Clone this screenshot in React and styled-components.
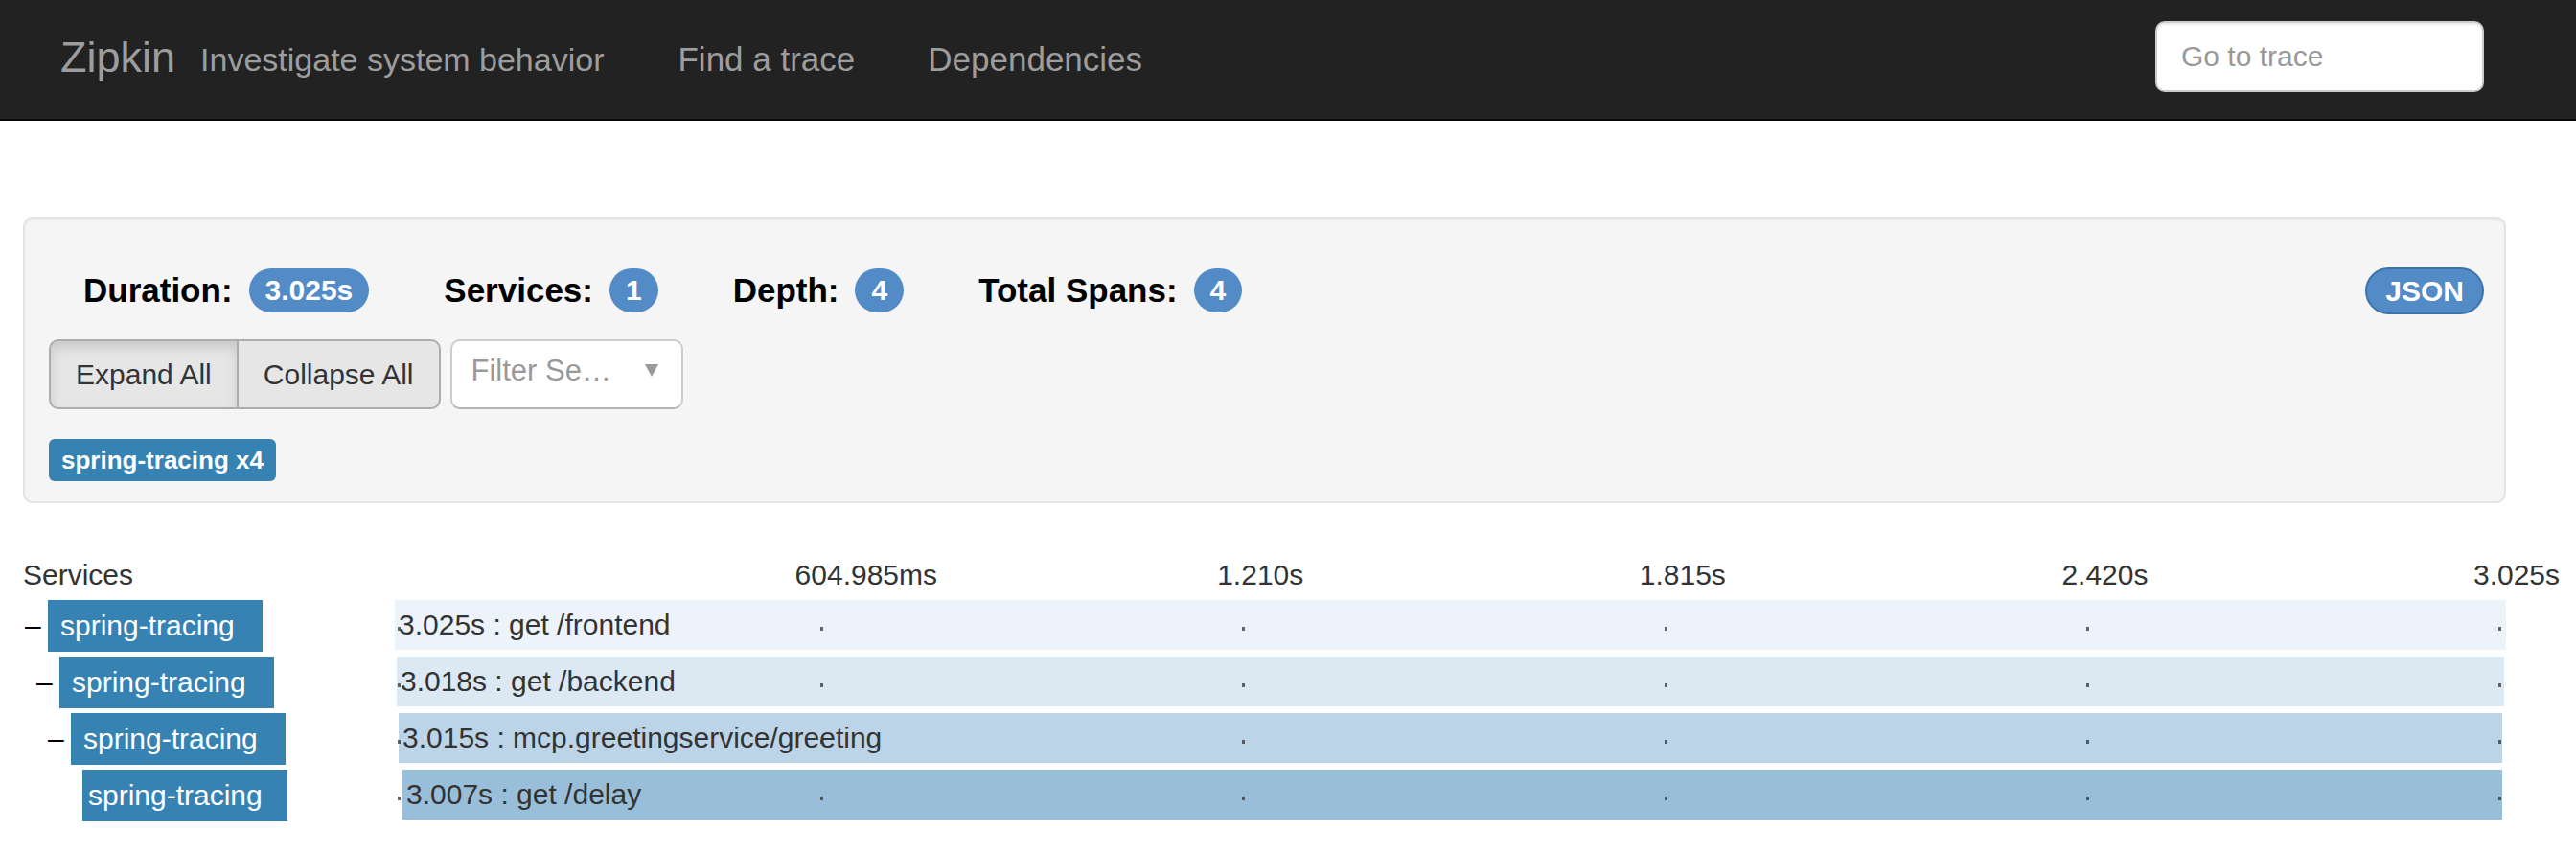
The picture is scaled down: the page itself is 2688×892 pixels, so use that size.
import React from 'react';
import styled, { createGlobalStyle, css } from 'styled-components';

const TOTAL = 3025;

const spans = [
  { depth: 0, start: 0, duration: 3025, label: '3.025s : get /frontend', color: '#edf3fa', open: true },
  { depth: 1, start: 2.7, duration: 3020, label: '3.018s : get /backend', color: '#dce9f3', open: true },
  { depth: 2, start: 5.5, duration: 3014, label: '3.015s : mcp.greetingservice/greeting', color: '#bcd4e7', open: true },
  { depth: 3, start: 11, duration: 3008, label: '3.007s : get /delay', color: '#99bed9', leaf: true },
];

const marks = [
  { pct: 20, text: '604.985ms' },
  { pct: 40, text: '1.210s' },
  { pct: 60, text: '1.815s' },
  { pct: 80, text: '2.420s' },
  { pct: 99.5, text: '3.025s' },
];

const ticks = [0, 20, 40, 60, 80, 99.5];

const App = () => {
  return (
    <>
      <GlobalStyle />
      <Navbar>
        <Brand>Zipkin</Brand>
        <Tagline>Investigate system behavior</Tagline>
        <NavLink>Find a trace</NavLink>
        <NavLink>Dependencies</NavLink>
        <Spacer />
        <SearchInput placeholder="Go to trace" />
      </Navbar>

      <Page>
        <Panel>
          <StatsRow>
            <Stat>
              <StatLabel>Duration:</StatLabel>
              <Badge>3.025s</Badge>
            </Stat>
            <Stat>
              <StatLabel>Services:</StatLabel>
              <Badge>1</Badge>
            </Stat>
            <Stat>
              <StatLabel>Depth:</StatLabel>
              <Badge>4</Badge>
            </Stat>
            <Stat>
              <StatLabel>Total Spans:</StatLabel>
              <Badge>4</Badge>
            </Stat>
            <JsonButton>JSON</JsonButton>
          </StatsRow>

          <ControlsRow>
            <ButtonGroup>
              <GroupButton $active>Expand All</GroupButton>
              <GroupButton>Collapse All</GroupButton>
            </ButtonGroup>
            <FilterSelect>
              <Placeholder>Filter Se…</Placeholder>
              <Caret />
            </FilterSelect>
          </ControlsRow>

          <TagRow>
            <ServiceTag>spring-tracing x4</ServiceTag>
          </TagRow>
        </Panel>

        <SpansHeader>
          <span>Services</span>
          <TimeAxis>
            {marks.map((m) => (
              <TimeLabel key={m.text} style={{ left: `calc(${m.pct}% - 23px)` }}>
                {m.text}
              </TimeLabel>
            ))}
          </TimeAxis>
        </SpansHeader>

        <SpanList>
          {spans.map((s) => (
            <SpanRow key={s.label}>
              <ServiceCell $depth={s.depth}>
                <Toggle>{s.open ? '–' : ''}</Toggle>
                <ServiceName $leaf={s.leaf}>spring-tracing</ServiceName>
              </ServiceCell>
              <Timeline>
                <Bar
                  style={{
                    left: `${(s.start / TOTAL) * 100}%`,
                    width: `${(s.duration / TOTAL) * 100}%`,
                    background: s.color,
                  }}
                >
                  {s.label}
                </Bar>
                {ticks.map((t) => (
                  <Tick key={t} style={{ left: `calc(${t}% + 3px)` }} />
                ))}
              </Timeline>
            </SpanRow>
          ))}
        </SpanList>
      </Page>
    </>
  );
};

export default App;

const GlobalStyle = createGlobalStyle`
  body {
    margin: 0;
    background: #fff;
    color: #333;
    font-family: "Liberation Sans", Arial, Helvetica, sans-serif;
  }
  * { box-sizing: border-box; }
`;

const Navbar = styled.nav`
  display: flex;
  align-items: center;
  height: 126px;
  background: #222;
  border-bottom: 2px solid #080808;
  padding: 0 96px 0 63px;
`;
const Brand = styled.span`
  font-size: 45px;
  color: #9d9d9d;
  margin-right: 26px;
  margin-top: -4px;
`;
const Tagline = styled.span`
  font-size: 34px;
  color: #9d9d9d;
  margin-right: 39px;
`;
const NavLink = styled.a`
  font-size: 35px;
  color: #9d9d9d;
  padding: 0 38px;
`;
const Spacer = styled.div`
  flex: 1;
`;
const SearchInput = styled.input`
  align-self: flex-start;
  margin-top: 22px;
  width: 343px;
  height: 74px;
  border: 2px solid #ccc;
  border-radius: 10px;
  padding: 0 25px;
  font-family: inherit;
  font-size: 30px;
  color: #555;
  background: #fff;
  box-shadow: inset 0 2px 2px rgba(0, 0, 0, 0.075);
  &::placeholder {
    color: #999;
  }
`;

const Page = styled.main`
  padding: 100px 73px 0 24px;
`;
const Panel = styled.section`
  background: #f5f5f5;
  border: 2px solid #e3e3e3;
  border-radius: 10px;
  box-shadow: inset 0 2px 2px rgba(0, 0, 0, 0.05);
  padding: 52px 21px 21px 25px;
`;
const StatsRow = styled.div`
  display: flex;
  align-items: center;
  gap: 78px;
  height: 46px;
  padding-left: 36px;
`;
const Stat = styled.div`
  display: flex;
  align-items: center;
  gap: 17px;
`;
const StatLabel = styled.span`
  font-size: 35px;
  font-weight: 700;
  color: #000;
`;
const Badge = styled.span`
  height: 46px;
  line-height: 46px;
  padding: 0 17px;
  border-radius: 23px;
  background: #538bc6;
  color: #fff;
  font-size: 30px;
  font-weight: 700;
`;
const JsonButton = styled.span`
  margin-left: auto;
  height: 49px;
  line-height: 45px;
  padding: 0 19px;
  border: 2px solid #3d72ab;
  border-radius: 25px;
  background: #538bc6;
  color: #fff;
  font-size: 30px;
  font-weight: 700;
`;

const ControlsRow = styled.div`
  display: flex;
  gap: 10px;
  margin-top: 28px;
`;
const ButtonGroup = styled.div`
  display: flex;
`;
const GroupButton = styled.button`
  height: 73px;
  padding: 0 26px;
  font-family: inherit;
  font-size: 30px;
  color: #333;
  background: #e6e6e6;
  border: 2px solid #adadad;
  &:first-child {
    border-radius: 10px 0 0 10px;
  }
  &:last-child {
    border-radius: 0 10px 10px 0;
    margin-left: -2px;
  }
  ${({ $active }) =>
    $active &&
    css`
      box-shadow: inset 0 7px 12px rgba(0, 0, 0, 0.125);
    `}
`;
const FilterSelect = styled.div`
  display: flex;
  align-items: center;
  justify-content: space-between;
  width: 243px;
  height: 73px;
  padding: 0 24px 8px 20px;
  background: #fff;
  border: 2px solid #ccc;
  border-bottom-color: #b3b3b3;
  border-radius: 10px;
`;
const Placeholder = styled.span`
  font-size: 31px;
  color: #999;
`;
const Caret = styled.span`
  width: 0;
  height: 0;
  border-left: 7px solid transparent;
  border-right: 7px solid transparent;
  border-top: 13px solid #999;
`;

const TagRow = styled.div`
  display: flex;
  margin-top: 31px;
`;
const ServiceTag = styled.span`
  height: 44px;
  line-height: 44px;
  padding: 0 13px;
  border-radius: 6px;
  background: #3683b3;
  color: #fff;
  font-size: 26px;
  font-weight: 700;
`;

const SpansHeader = styled.div`
  display: grid;
  grid-template-columns: 388px 1fr;
  margin-top: 58px;
  height: 43px;
  line-height: 34px;
  font-size: 30px;
  color: #333;
`;
const TimeAxis = styled.div`
  position: relative;
`;
const TimeLabel = styled.span`
  position: absolute;
  top: 0;
  white-space: nowrap;
`;

const SpanList = styled.div`
  display: flex;
  flex-direction: column;
  gap: 5px;
`;
const SpanRow = styled.div`
  display: grid;
  grid-template-columns: 388px 1fr;
  height: 54px;
`;
const ServiceCell = styled.div`
  display: flex;
  align-items: center;
  padding-left: ${({ $depth }) => 2 + $depth * 12}px;
`;
const Toggle = styled.span`
  width: 24px;
  font-size: 30px;
  color: #000;
`;
const ServiceName = styled.span`
  width: ${({ $leaf }) => ($leaf ? 214 : 224)}px;
  height: 54px;
  line-height: 54px;
  padding-left: ${({ $leaf }) => ($leaf ? 6 : 13)}px;
  background: #3683b3;
  color: #fff;
  font-size: 30px;
  white-space: nowrap;
  overflow: hidden;
`;
const Timeline = styled.div`
  position: relative;
`;
const Bar = styled.div`
  position: absolute;
  top: 0;
  height: 52px;
  line-height: 52px;
  padding-left: 4px;
  font-size: 30px;
  color: #333;
  white-space: nowrap;
`;
const Tick = styled.span`
  position: absolute;
  top: 28px;
  width: 3px;
  height: 4px;
  background: #333;
  opacity: 0.75;
`;
